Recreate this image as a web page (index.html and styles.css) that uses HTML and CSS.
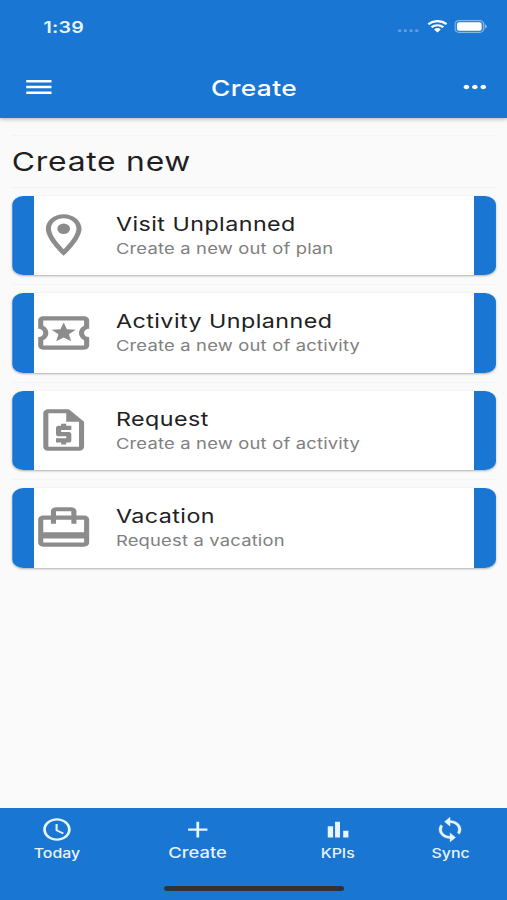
FILE: index.html
```html
<!DOCTYPE html>
<html lang="en">
<head>
<meta charset="utf-8">
<title>Create</title>
<link rel="stylesheet" href="styles.css">
</head>
<body>
<div class="app">
  <header class="header">
    <div class="status">
      <span class="time">1:39</span>
      <div class="signals">
        <svg class="dots" viewBox="0 0 20 4"><circle cx="2" cy="2" r="1.6"/><circle cx="7.2" cy="2" r="1.6"/><circle cx="12.4" cy="2" r="1.6"/><circle cx="17.6" cy="2" r="1.6"/></svg>
        <svg class="wifi" viewBox="0 0 16 12"><path d="M0 3.2a11.3 11.3 0 0 1 16 0l-1.4 1.7a9.4 9.4 0 0 0-13.2 0zM2.6 6.2a7.6 7.6 0 0 1 10.8 0L12 7.8a5.6 5.6 0 0 0-8 0zM5.3 9.1a3.8 3.8 0 0 1 5.4 0L8 12z"/></svg>
        <svg class="battery" viewBox="0 0 27 13"><rect class="shell" x=".5" y=".5" width="23.5" height="12" rx="3.4"/><rect x="2.2" y="2.2" width="20.1" height="8.6" rx="1.8"/><path class="tip" d="M25 4.3a2.4 2.4 0 0 1 0 4.4z"/></svg>
      </div>
    </div>
    <div class="toolbar">
      <svg class="icon" viewBox="0 0 24 24"><path d="M3 18.1h18v-2.2H3zm0-5h18v-2.2H3zm0-7.2v2.2h18V5.900z"/></svg>
      <h1 class="title">Create</h1>
      <svg class="icon" viewBox="0 0 24 24"><path d="M6 10c-1.1 0-2 .9-2 2s.9 2 2 2 2-.9 2-2-.9-2-2-2zm12 0c-1.1 0-2 .9-2 2s.9 2 2 2 2-.9 2-2-.9-2-2-2zm-6 0c-1.1 0-2 .9-2 2s.9 2 2 2 2-.9 2-2-.9-2-2-2z"/></svg>
    </div>
  </header>
  <main class="content">
    <h2 class="heading">Create new</h2>
    <div class="row"><article class="card">
      <svg class="card-icon" viewBox="0 0 24 24"><path d="M12 2C8.13 2 5 5.13 5 9c0 5.25 7 13 7 13s7-7.75 7-13c0-3.87-3.13-7-7-7zM7 9c0-2.76 2.24-5 5-5s5 2.24 5 5c0 2.88-2.88 7.19-5 9.88C9.92 16.21 7 11.85 7 9z"/><circle cx="12" cy="9" r="2.5"/></svg>
      <div class="text"><h3 class="name">Visit Unplanned</h3><p class="note">Create a new out of plan</p></div>
    </article></div>
    <div class="row"><article class="card">
      <svg class="card-icon" viewBox="0 0 24 24"><path d="M20 12c0-1.1.9-2 2-2V6c0-1.1-.9-2-2-2H4c-1.1 0-1.99.9-1.99 2v4c1.1 0 1.99.9 1.99 2s-.89 2-2 2v4c0 1.1.9 2 2 2h16c1.1 0 2-.9 2-2v-4c-1.1 0-2-.9-2-2zm0-3.46A4 4 0 0 0 18 12c0 1.48.81 2.77 2 3.46V18H4v-2.54c1.19-.69 2-1.99 2-3.46 0-1.48-.8-2.77-1.99-3.46L4 6h16zM9.07 16L12 14.12 14.93 16l-.89-3.36 2.69-2.2-3.47-.21L12 7l-1.27 3.22-3.47.21 2.69 2.2z"/></svg>
      <div class="text"><h3 class="name">Activity Unplanned</h3><p class="note">Create a new out of activity</p></div>
    </article></div>
    <div class="row"><article class="card">
      <svg class="card-icon" viewBox="0 0 24 24"><path d="M14 2H6c-1.1 0-2 .9-2 2v16c0 1.1.9 2 2 2h12c1.1 0 2-.9 2-2V8zM6 20V4h7v4h5v12zM11 19h2v-1h1c.55 0 1-.45 1-1v-3c0-.55-.45-1-1-1h-3v-1h4v-2h-2V9h-2v1h-1c-.55 0-1 .45-1 1v3c0 .55.45 1 1 1h3v1H9v2h2zM13 3v5h6z"/></svg>
      <div class="text"><h3 class="name">Request</h3><p class="note">Create a new out of activity</p></div>
    </article></div>
    <div class="row"><article class="card">
      <svg class="card-icon" viewBox="0 0 24 24"><path d="M20 6h-3V4c0-1.11-.89-2-2-2H9c-1.11 0-2 .89-2 2v2H4c-1.11 0-2 .89-2 2v11c0 1.11.89 2 2 2h16c1.11 0 2-.89 2-2V8c0-1.11-.89-2-2-2zM9 4h6v2H9zm11 15H4v-2h16zm0-5H4V8h3v2h2V8h6v2h2V8h3z"/></svg>
      <div class="text"><h3 class="name">Vacation</h3><p class="note">Request a vacation</p></div>
    </article></div>
  </main>
  <footer class="footer">
    <nav class="nav">
      <a class="tab"><svg class="tab-icon" viewBox="0 0 24 24"><path d="M11.99 2C6.47 2 2 6.48 2 12s4.47 10 9.99 10C17.52 22 22 17.52 22 12S17.52 2 11.99 2zM12 20c-4.42 0-8-3.58-8-8s3.58-8 8-8 8 3.58 8 8-3.58 8-8 8zm.5-13H11v6l5.25 3.15.75-1.23-4.5-2.67z"/></svg><span class="label">Today</span></a>
      <a class="tab active"><svg class="tab-icon" viewBox="0 0 24 24"><path d="M19 13h-6v6h-2v-6H5v-2h6V5h2v6h6z"/></svg><span class="label">Create</span></a>
      <a class="tab"><svg class="tab-icon" viewBox="0 0 24 24"><path d="M5 9.200h3.900V19H5zM10.300 5h3.600v14h-3.600zm5.900 8H20v6h-3.800z"/></svg><span class="label">KPIs</span></a>
      <a class="tab"><svg class="tab-icon" viewBox="0 0 24 24"><path stroke="currentColor" stroke-width=".3" d="M12 4V1L8 5l4 4V6c3.310 0 6 2.690 6 6 0 1.010-.25 1.970-.7 2.800l1.460 1.460C19.540 15.030 20 13.570 20 12c0-4.420-3.580-8-8-8zm0 14c-3.310 0-6-2.690-6-6 0-1.010.25-1.970.7-2.800L5.240 7.740C4.460 8.970 4 10.430 4 12c0 4.420 3.580 8 8 8v3l4-4-4-4z"/></svg><span class="label">Sync</span></a>
    </nav>
    <div class="home-bar"></div>
  </footer>
</div>
</body>
</html>
```
FILE: styles.css
```css
* { box-sizing: border-box; margin: 0; padding: 0; }

html, body { width: 507px; height: 900px; overflow: hidden; background: #fafafa; }

body { font-family: Inter, "Liberation Sans", sans-serif; }

svg { display: block; flex: none; fill: currentColor; }

/* 414-unit wide layout stretched to the window width */
.app {
  width: 414px;
  height: 900px;
  display: flex;
  flex-direction: column;
  transform: scaleX(1.22464);
  transform-origin: 0 0;
}

.header {
  height: 118px;
  flex: none;
  background: #1976d2;
  color: #fff;
  box-shadow: 0 1px 4px rgba(0, 0, 0, .3);
}

.status {
  height: 56px;
  padding: 0 16.5px 3px 35.6px;
  display: flex;
  align-items: center;
  justify-content: space-between;
}

.time { font-size: 16px; font-weight: 600; color: #e8f4ff; letter-spacing: .2px; }

.signals { display: flex; align-items: center; }
.dots { width: 19px; height: 3.6px; margin: 8px 6px 0 0; opacity: .3; }
.wifi { width: 16.4px; height: 12.5px; margin-right: 5.6px; }
.battery { width: 27px; height: 13px; }
.shell { fill: rgba(255, 255, 255, .1); stroke: rgba(255, 255, 255, .45); }
.tip { opacity: .5; }

.toolbar {
  height: 62px;
  padding: 0 12.900px 0 17.800px;
  display: flex;
  align-items: center;
  justify-content: space-between;
}

.icon { width: 27.500px; height: 28px; }
.title {
  padding: 1px 4px 0 0;
  font-size: 21.500px;
  font-weight: 500;
  line-height: 28px;
  letter-spacing: .3px;
}

.content { flex: 1; padding: 17px 9.4px 0 9.700px; }

.heading {
  height: 52.5px;
  border-top: 1px solid #f4f4f4;
  border-bottom: 1px solid #f1f1f1;
  font-size: 26px;
  font-weight: 400;
  line-height: 52px;
  letter-spacing: .6px;
  color: #1f1f1f;
}

.row { height: 97.5px; padding-top: 8.2px; border-bottom: 1px solid #f4f4f4; }
.row:last-child { border-bottom: 0; }

.card {
  height: 79.5px;
  padding-left: 17.2px;
  display: flex;
  align-items: center;
  background: linear-gradient(90deg, #1976d2 17.4px, #fff 17.4px calc(100% - 17.6px), #1976d2 calc(100% - 17.6px));
  border-radius: 9px;
  box-shadow: 0 1px 2px rgba(0, 0, 0, .3);
}

.card-icon { width: 50px; height: 50px; color: #8c8c8c; }
.text { padding-top: 2px; margin-left: 17.8px; white-space: nowrap; }
.name { font-size: 19px; font-weight: 400; line-height: 24px; letter-spacing: .37px; color: #212121; }
.note { font-size: 15px; line-height: 23px; letter-spacing: .16px; color: #808080; }

.footer { height: 92px; flex: none; background: #1976d2; color: #e8f4ff; }

.nav {
  height: 77.5px;
  display: grid;
  grid-template-columns: 93px 136.6px 92.4px 92px;
}

.tab {
  padding-top: 8px;
  display: flex;
  flex-direction: column;
  align-items: center;
}

.tab-icon { width: 27px; height: 27px; }
.label { font-size: 13px; font-weight: 500; line-height: 20px; }
.active .label { font-size: 15px; line-height: 19px; }

.home-bar { width: 147px; height: 5.5px; margin: 0 auto; border-radius: 3px; background: #303236; }
```
